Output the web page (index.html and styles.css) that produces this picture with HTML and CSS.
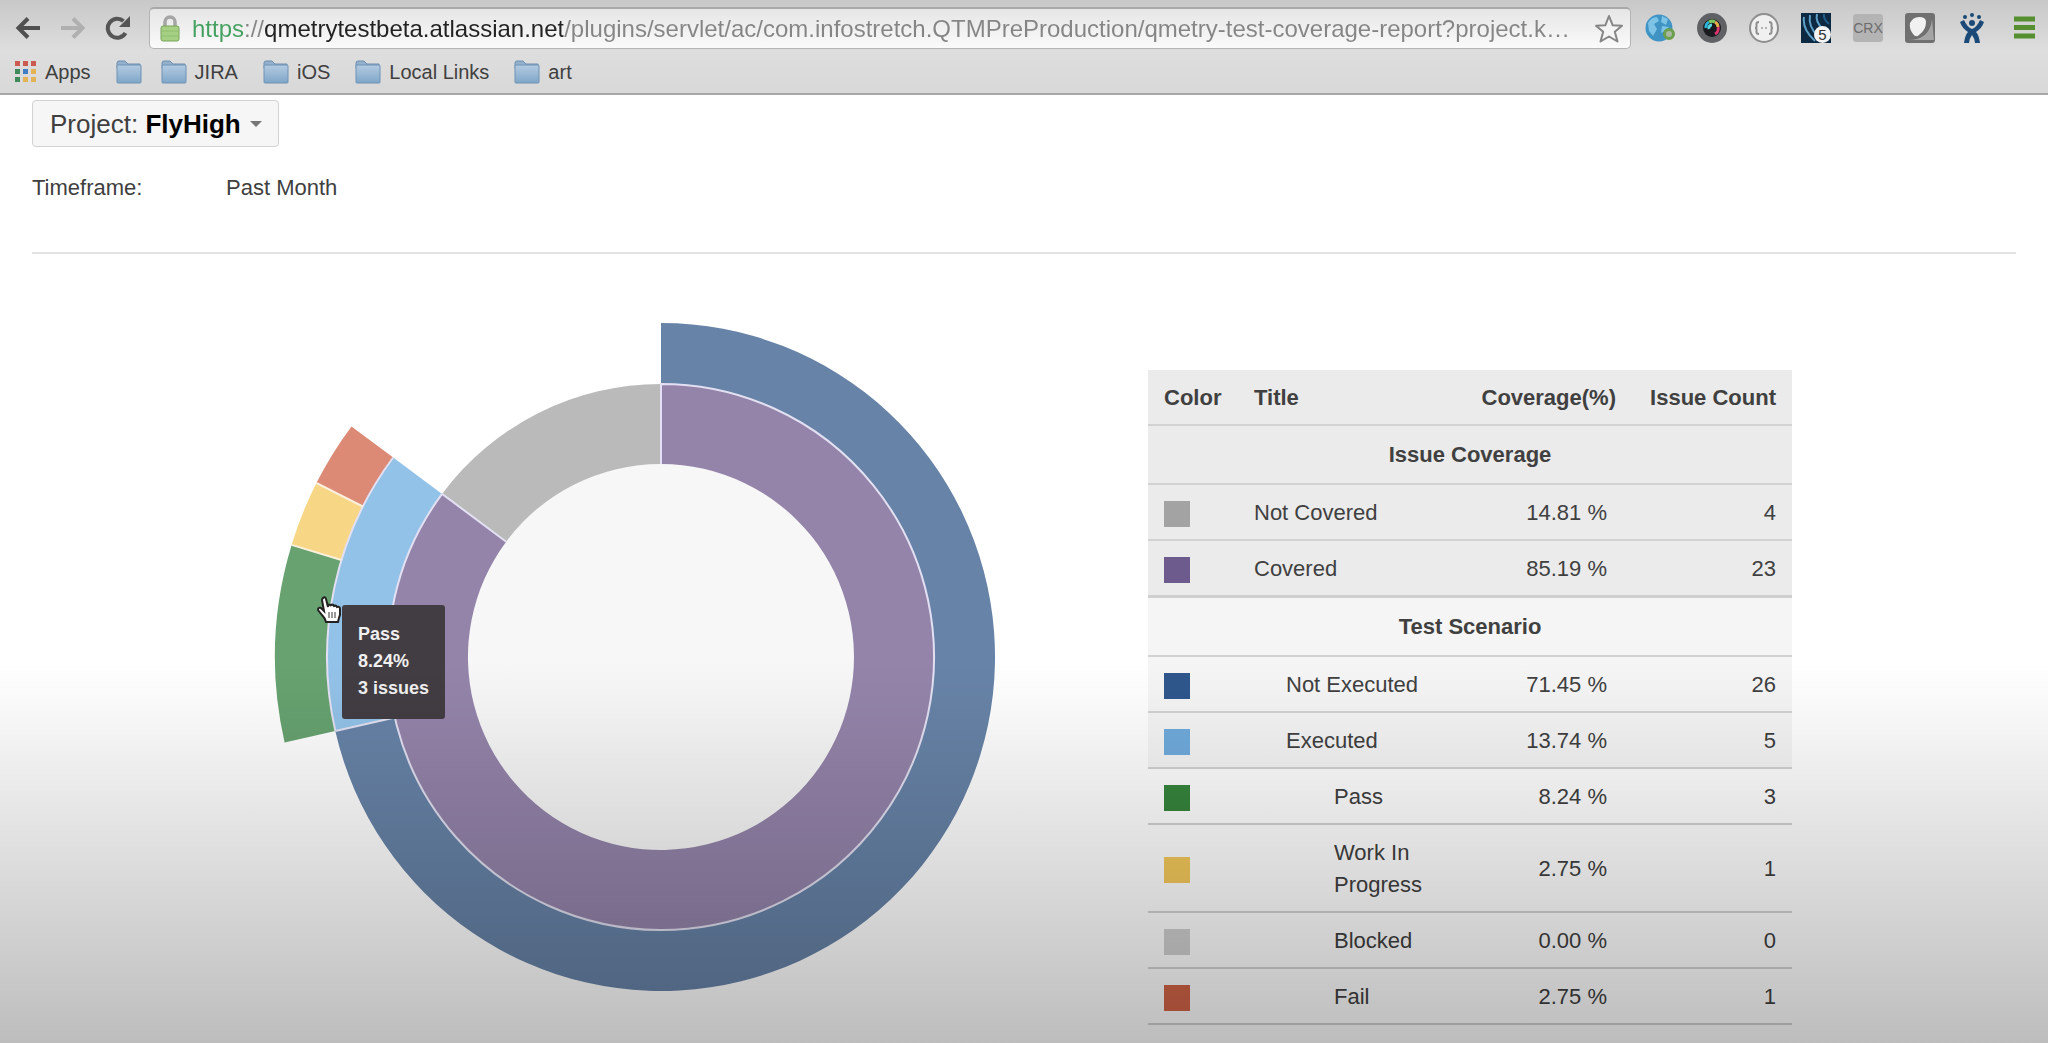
FILE: index.html
```html
<!DOCTYPE html>
<html lang="en">
<head>
<meta charset="utf-8">
<title>Test Coverage Report</title>
<link rel="stylesheet" href="styles.css">
</head>
<body>
<header class="browser">
  <div class="toolbar">
    <div class="nav">
      <button class="icon-button" type="button" aria-label="Back">
        <svg width="26" height="24" viewBox="0 0 26 24" fill="none" stroke="#505050" stroke-width="4"><path d="M25 12H4M13 2.500L3.500 12L13 21.500"/></svg>
      </button>
      <button class="icon-button" type="button" aria-label="Forward">
        <svg width="26" height="24" viewBox="0 0 26 24" fill="none" stroke="#b0b0b0" stroke-width="4"><path d="M1 12H22M13 2.500L22.500 12L13 21.500"/></svg>
      </button>
      <button class="icon-button" type="button" aria-label="Reload">
        <svg width="26" height="24" viewBox="0 0 26 24"><path d="M20.500 17A9.500 9.500 0 1 1 18.500 5" fill="none" stroke="#555" stroke-width="4"/><path d="M25 0V11H14Z" fill="#555"/></svg>
      </button>
    </div>
    <div class="omnibox">
      <svg width="20" height="27" viewBox="0 0 20 27"><path d="M5 13V7a5 5 0 0 1 10 0V13" fill="none" stroke="#a5a5a5" stroke-width="3.500"/><rect x="1" y="11" width="18" height="15" rx="2" fill="#a6d184" stroke="#76a458"/><path d="M2 16H18M2 21H18" stroke="#8fbd6e"/></svg>
      <input class="url" type="text" aria-label="Address" value="https://qmetrytestbeta.atlassian.net/plugins/servlet/ac/com.infostretch.QTMPreProduction/qmetry-test-coverage-report?project.k…">
      <button class="icon-button" type="button" aria-label="Bookmark this page">
        <svg width="30" height="30" viewBox="0 0 30 30" fill="#f4f4f4" stroke="#858585" stroke-width="2" stroke-linejoin="round"><path d="M15 2L18.700 11.300L28 11.800L20.800 17.800L23.500 27.500L15 22.500L6.500 27.500L9.200 17.800L2 11.800L11.300 11.300Z"/></svg>
      </button>
    </div>
    <div class="extensions">
      <button class="icon-button" type="button" aria-label="Web proxy">
        <svg width="30" height="30" viewBox="0 0 30 30"><circle cx="14" cy="15" r="13.500" fill="#3f94c4"/><path d="M3 10Q6 4 12 4L14 8L9 11L12 16L8 23L4 18ZM17 3L23 6L21 12L16 9ZM17 13L24 14L20 18L16 20Z" fill="#7cc3e6"/><circle cx="24" cy="21" r="4.500" fill="#a9b8a0" stroke="#6b9f4d" stroke-width="3"/></svg>
      </button>
      <button class="icon-button" type="button" aria-label="Screen capture">
        <svg width="30" height="30" viewBox="0 0 30 30"><circle cx="15" cy="15" r="15" fill="#606164"/><circle cx="15" cy="15" r="9" fill="#191a20"/><g fill="none" stroke-width="3"><path d="M9 15A6 6 0 0 1 12 9" stroke="#2bb5d8"/><path d="M12 9A6 6 0 0 1 18 9" stroke="#7bc95c"/><path d="M18 9A6 6 0 0 1 21 14" stroke="#e5b14a"/><path d="M21 14A6 6 0 0 1 18 21" stroke="#d9356d"/><path d="M12 16A3 3 0 0 1 15 12" stroke="#58d7e6"/></g></svg>
      </button>
      <button class="icon-button" type="button" aria-label="JSON viewer">
        <svg width="30" height="30" viewBox="0 0 30 30" fill="none" stroke="#8e8e8e" stroke-width="2"><circle cx="15" cy="15" r="14" fill="#f0f0f0"/><path d="M10 9Q7 9 7.500 12T6 15Q8 15 7.500 18T10 21M20 9Q23 9 22.500 12T24 15Q22 15 22.500 18T20 21"/><path d="M12 15H18" stroke="#b5b5b5" stroke-dasharray="2 2"/></svg>
      </button>
      <button class="icon-button badged" type="button" aria-label="Signal, 5 items">
        <svg width="30" height="30" viewBox="0 0 30 30"><path d="M0 0H30V30H0Z" fill="#0d2942"/><g fill="none" stroke="#5d9fc6" stroke-width="2"><path d="M3 4Q1 16 14 28"/><path d="M9 2Q7 14 17 23"/><path d="M16 1Q14 9 22 16"/><path d="M23 1Q22 6 28 11" stroke="#1f5c88"/></g></svg>
        <span class="badge">5</span>
      </button>
      <button class="icon-button crx" type="button">CRX</button>
      <button class="icon-button" type="button" aria-label="Shell">
        <svg width="30" height="30" viewBox="0 0 30 30"><rect width="30" height="30" rx="3" fill="#707070"/><path d="M3 27Q25 27 27 6L29 27Z" fill="#a4a4a4"/><path d="M5 10Q8 4 14 4Q21 4 21 9Q21 17 14 22Q11 25 8 21Q4 16 5 10Z" fill="#f1f1f1"/></svg>
      </button>
      <button class="icon-button" type="button" aria-label="JIRA">
        <svg width="30" height="30" viewBox="0 0 30 30" fill="#1b4a78"><circle cx="8" cy="4" r="2"/><circle cx="15" cy="2" r="2"/><circle cx="22" cy="4" r="2"/><circle cx="15" cy="10" r="3"/><path d="M3 9L7 7Q10 14 15 16Q20 14 23 7L27 9Q25 15 19 19Q22 22 23 30H18Q18 26 15 22Q12 26 12 30H7Q8 22 11 19Q5 15 3 9Z"/></svg>
      </button>
      <button class="icon-button" type="button" aria-label="Menu">
        <svg width="30" height="30" viewBox="0 0 30 30" stroke="#568f2f" stroke-width="5"><path d="M5 6H26M5 14.500H26M5 23H26"/></svg>
      </button>
    </div>
  </div>
  <nav class="bookmarks" aria-label="Bookmarks">
    <a class="bookmark" href="#"><svg width="22" height="22" viewBox="0 0 22 22"><path d="M0 0h5v5H0zM8 0h5v5H8zM16 0h5v5H16z" fill="#cb5a50"/><path d="M0 8h5v5H0zM0 16h5v5H0z" fill="#3f8a5b"/><path d="M8 8h5v5H8z" fill="#3e7fc4"/><path d="M16 8h5v5H16zM8 16h5v5H8zM16 16h5v5H16z" fill="#e3b356"/></svg><span class="bookmark-name">Apps</span></a>
    <a class="bookmark" href="#" aria-label="Folder"><svg width="26" height="24" viewBox="0 0 26 24"><use href="#folder"/></svg></a>
    <a class="bookmark" href="#"><svg width="26" height="24" viewBox="0 0 26 24"><use href="#folder"/></svg><span class="bookmark-name">JIRA</span></a>
    <a class="bookmark" href="#"><svg width="26" height="24" viewBox="0 0 26 24"><use href="#folder"/></svg><span class="bookmark-name">iOS</span></a>
    <a class="bookmark" href="#"><svg width="26" height="24" viewBox="0 0 26 24"><use href="#folder"/></svg><span class="bookmark-name">Local Links</span></a>
    <a class="bookmark" href="#"><svg width="26" height="24" viewBox="0 0 26 24">
      <defs>
        <linearGradient id="folder-fill" x1="0" y1="0" x2="0" y2="1"><stop offset="0" stop-color="#b3cbe1"/><stop offset="1" stop-color="#7fa6c8"/></linearGradient>
        <g id="folder"><path d="M1 5V3Q1 1 3 1H9L12 4H24V8H1Z" fill="#93b1cd" stroke="#6f8fae"/><rect x="1" y="5" width="24" height="18" rx="1" fill="url(#folder-fill)" stroke="#6f93b5"/></g>
      </defs>
      <use href="#folder"/></svg><span class="bookmark-name">art</span></a>
  </nav>
</header>

<main class="page">
  <button class="project" type="button"><span>Project: <strong>FlyHigh</strong></span><svg width="12" height="6" viewBox="0 0 12 6"><path d="M0 0H12L6 6Z" fill="#777"/></svg></button>
  <dl class="filters">
    <dt>Timeframe:</dt>
    <dd>Past Month</dd>
  </dl>
  <hr class="divider">

  <div class="report">
    <figure class="chart">
      <svg viewBox="-387 -335 722 670" width="722" height="670" role="img" aria-label="Coverage by issue and test scenario">
        <circle r="193" fill="#f7f7f7"/>
        <path fill="#9484aa" d="M0 -193V-273A273 273 0 1 1 -218.900 -163.100L-154.800 -115.300A193 193 0 1 0 0 -193Z"/>
        <path fill="#bababa" d="M-154.800 -115.300L-218.900 -163.100A273 273 0 0 1 0 -273V-193A193 193 0 0 0 -154.800 -115.300Z"/>
        <path fill="#6783a7" d="M0 -273V-334A334 334 0 1 1 -325.700 73.900L-266.200 60.400A273 273 0 1 0 0 -273Z"/>
        <path fill="#93c2e8" d="M-266.200 60.400L-325.700 73.900A334 334 0 0 1 -267.800 -199.500L-218.900 -163.100A273 273 0 0 0 -266.200 60.400Z"/>
        <path fill="#67a270" d="M-325.700 73.900L-376.400 85.400A386 386 0 0 1 -369.400 -112.100L-319.600 -97A334 334 0 0 0 -325.700 73.900Z"/>
        <path fill="#f7d685" d="M-319.600 -97L-369.400 -112.100A386 386 0 0 1 -344.600 -174L-298.200 -150.500A334 334 0 0 0 -319.600 -97Z"/>
        <path fill="#dc8976" d="M-298.200 -150.500L-344.600 -174A386 386 0 0 1 -309.500 -230.600L-267.800 -199.500A334 334 0 0 0 -298.200 -150.500Z"/>
        <g fill="none" stroke="#e2e0f2" stroke-width="2">
          <path d="M0 -193V-273A273 273 0 1 1 -218.900 -163.100L-154.800 -115.300"/>
          <path d="M-266.200 60.400L-325.700 73.900"/>
          <path d="M-325.700 73.900A334 334 0 0 1 -267.800 -199.500"/>
          <path d="M-319.600 -97L-369.400 -112.100M-298.200 -150.500L-344.600 -174" stroke="#fbf0dc"/>
        </g>
      </svg>
      <div class="tooltip" role="tooltip">Pass<br>8.24%<br>3 issues</div>
      <svg class="pointer" width="24" height="28" viewBox="0 0 24 28"><path d="M6 2Q8 0 9 3L11 11V9Q13 8 14 10V9Q16 8 17 10V10Q19 9 20 11Q23 10 23 13V19Q22 21 21 26H9Q8 22 5 19L1 14Q1 11 4 12L7 15L5 4Q5 3 6 2Z" fill="#fff" stroke="#222" stroke-width="2"/><path d="M12 16V22M15 16V22M18 16V22" stroke="#333"/></svg>
    </figure>

    <table class="summary">
      <thead>
        <tr><th class="color" scope="col">Color</th><th class="title" scope="col">Title</th><th class="number" scope="col">Coverage(%)</th><th class="number count" scope="col">Issue Count</th></tr>
      </thead>
      <tbody class="issues">
        <tr><th class="group" colspan="4" scope="colgroup">Issue Coverage</th></tr>
        <tr><td><span class="swatch not-covered"></span></td><td>Not Covered</td><td class="number percent">14.81 %</td><td class="number">4</td></tr>
        <tr><td><span class="swatch covered"></span></td><td>Covered</td><td class="number percent">85.19 %</td><td class="number">23</td></tr>
      </tbody>
      <tbody class="scenarios">
        <tr><th class="group" colspan="4" scope="colgroup">Test Scenario</th></tr>
        <tr><td><span class="swatch not-executed"></span></td><td class="level-1">Not Executed</td><td class="number percent">71.45 %</td><td class="number">26</td></tr>
        <tr><td><span class="swatch executed"></span></td><td class="level-1">Executed</td><td class="number percent">13.74 %</td><td class="number">5</td></tr>
      </tbody>
      <tbody>
        <tr><td><span class="swatch pass"></span></td><td class="level-2">Pass</td><td class="number percent">8.24 %</td><td class="number">3</td></tr>
        <tr><td><span class="swatch progress"></span></td><td class="level-2">Work In Progress</td><td class="number percent">2.75 %</td><td class="number">1</td></tr>
        <tr><td><span class="swatch blocked"></span></td><td class="level-2">Blocked</td><td class="number percent">0.00 %</td><td class="number">0</td></tr>
        <tr><td><span class="swatch fail"></span></td><td class="level-2">Fail</td><td class="number percent">2.75 %</td><td class="number">1</td></tr>
      </tbody>
    </table>
  </div>
</main>
</body>
</html>
```
FILE: styles.css
```css
* { box-sizing: border-box; }

body {
  margin: 0;
  min-height: 100vh;
  display: flex;
  flex-direction: column;
  background: #fff;
  color: #404040;
  font-family: "Liberation Sans", Arial, sans-serif;
  font-size: 22px;
  line-height: 32px;
}

button, input { font: inherit; color: inherit; }
svg { display: block; flex: none; }

/* Browser chrome */
.browser {
  padding-top: 7px;
  background: linear-gradient(#c8c8c8, #dedede 55%, #d8d8d8);
  border-bottom: 2px solid #a8a8a8;
}

.toolbar { display: flex; align-items: center; padding: 0 9px 0 15px; }
.nav { display: flex; gap: 19px; margin-right: 18px; }

.icon-button {
  display: block;
  flex: none;
  padding: 0;
  border: 0;
  background: none;
}

.omnibox {
  flex: 1;
  min-width: 0;
  height: 42px;
  display: flex;
  align-items: center;
  gap: 12px;
  padding: 0 6px 0 10px;
  border: 1px solid #b4b4b4;
  border-top: 2px solid #a9a9a9;
  border-radius: 5px;
  background: linear-gradient(#e6e6e6, #fafafa);
}

.url {
  flex: 1;
  min-width: 0;
  padding: 0;
  border: 0;
  font-size: 24px;
  color: transparent;
  background: linear-gradient(90deg, #43a05f 52px, #858585 52px 72px, #222 72px 371px, #858585 371px);
  background-clip: text;
}

.extensions { display: flex; align-items: center; gap: 22px; margin-left: 14px; }
.badged { position: relative; }

.badge {
  position: absolute;
  right: 0;
  bottom: 0;
  width: 17px;
  height: 17px;
  border-radius: 50%;
  background: #f4f4f4;
  color: #333;
  font-size: 15px;
  line-height: 17px;
}

.crx {
  width: 30px;
  height: 28px;
  border-radius: 3px;
  background: #b4b4b4;
  color: #6c6c6c;
  font-size: 14px;
  line-height: 28px;
}

.bookmarks {
  display: flex;
  align-items: center;
  gap: 19px;
  height: 44px;
  padding: 2px 0 0 15px;
}

.bookmark {
  display: flex;
  align-items: center;
  gap: 8px;
  color: #404040;
  font-size: 20px;
  text-decoration: none;
}

.bookmark-name { padding-right: 6px; }

/* Report page; the lower part of the window is shaded */
.page { position: relative; flex: 1; padding: 5px 32px 12px; }

.page::after {
  content: "";
  position: absolute;
  left: 0;
  right: 0;
  bottom: 0;
  height: 383px;
  background: linear-gradient(transparent, rgba(0, 0, 0, .015) 8%, rgba(0, 0, 0, .26));
  pointer-events: none;
}

.project {
  display: flex;
  align-items: center;
  gap: 9px;
  height: 47px;
  padding: 0 16px 0 17px;
  border: 1px solid #d2d2d2;
  border-radius: 4px;
  background: #f6f6f6;
  font-size: 26px;
}

.project strong { color: #000; }

.filters { display: grid; grid-template-columns: 194px 1fr; margin: 25px 0 48px; }
.filters dd { margin: 0; }
.divider { height: 2px; margin: 0; border: 0; background: #e3e3e3; }

.report { display: grid; grid-template-columns: 9fr 7fr; align-items: start; }

.chart {
  position: relative;
  justify-self: center;
  width: 722px;
  margin: 68px 0 0 90px;
}

.tooltip {
  position: absolute;
  left: 68px;
  top: 283px;
  padding: 16px 16px 17px;
  border-radius: 3px;
  background: #423d42;
  color: #f0f0f0;
  font-size: 18px;
  font-weight: bold;
  line-height: 27px;
}

.pointer { position: absolute; left: 43px; top: 274px; }

/* Coverage table */
.summary {
  width: 644px;
  margin-top: 116px;
  table-layout: fixed;
  border-collapse: separate;
  border-spacing: 0;
}

.summary th, .summary td {
  padding: 12px 16px 10px;
  border-bottom: 2px solid #d2d2d2;
  text-align: left;
  vertical-align: middle;
}

.summary .color { width: 90px; }
.summary .title { width: 225px; }
.summary .count { width: 160px; }
.summary .number { text-align: right; white-space: nowrap; }
.summary .percent { padding-right: 25px; }
.summary .group { padding: 13px 16px 12px; text-align: center; }
.summary .level-1 { padding-left: 48px; }
.summary .level-2 { padding-left: 96px; }
.summary thead, .issues { background: #ebebeb; }
.scenarios { background: #f5f5f5; }
.summary .issues tr:last-child td { border-bottom: 3px solid #cfcfcf; }

.swatch { display: block; width: 26px; height: 26px; margin-top: 2px; }
.not-covered { background: #a3a3a3; }
.covered { background: #6d5b8d; }
.not-executed { background: #2f578c; }
.executed { background: #70abdd; }
.pass { background: #36853c; }
.progress { background: #f4c95b; }
.blocked { background: #d0d0d0; }
.fail { background: #d26447; }
```
